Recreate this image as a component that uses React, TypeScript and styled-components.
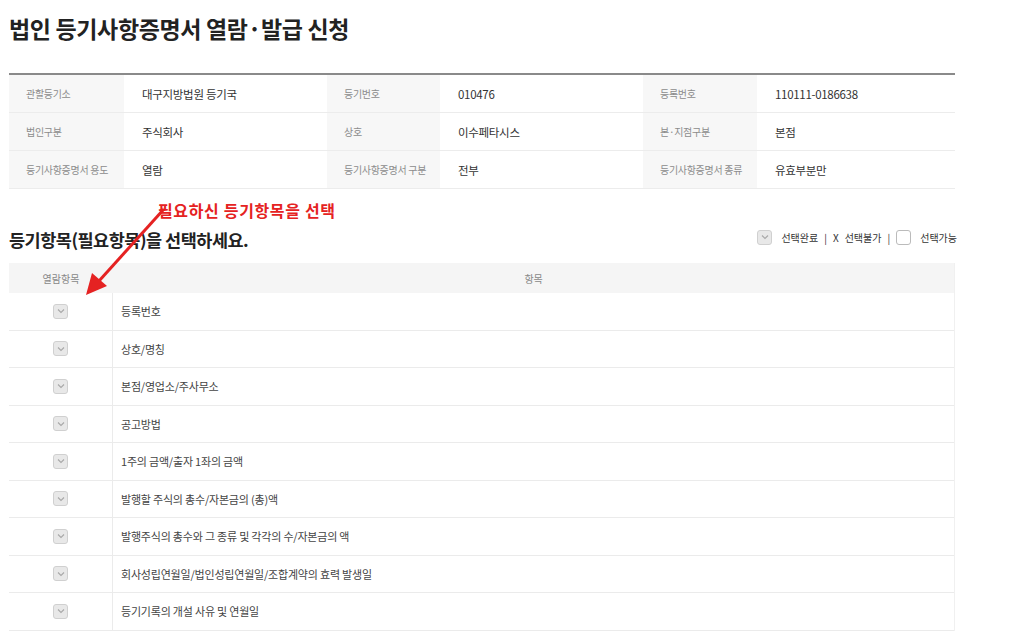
import styled, { createGlobalStyle } from 'styled-components';

const GlobalStyle = createGlobalStyle`
  body {
    margin: 0;
    background: #fff;
    font-family: 'Noto Sans CJK KR', 'Noto Sans', sans-serif;
    color: #333;
  }
`;

const Page = styled.div`
  width: 946px;
  padding: 14px 0 0 9px;
`;

const Title = styled.h1`
  margin: 0;
  font-size: 23px;
  line-height: 28px;
  font-weight: 700;
  color: #222;
  letter-spacing: -0.35px;
`;

const InfoGrid = styled.div`
  margin-top: 31px;
  display: grid;
  grid-template-columns: 115px 203px 113px 203px 114px 198px;
  border-top: 2px solid #8a8a8a;
`;

const InfoCell = styled.div<{ $label?: boolean }>`
  height: 37px;
  display: flex;
  align-items: center;
  padding-left: ${({ $label }) => ($label ? '17px' : '18px')};
  border-bottom: 1px solid #ececec;
  background: ${({ $label }) => ($label ? '#f7f7f7' : '#fff')};
  font-size: ${({ $label }) => ($label ? '10px' : '11.5px')};
  color: ${({ $label }) => ($label ? '#8c8c8c' : '#333')};
  letter-spacing: -0.3px;
`;

const SectionHead = styled.div`
  position: relative;
  margin-top: 38px;
  display: flex;
  align-items: center;
  justify-content: space-between;
  height: 24px;
`;

const SubTitle = styled.h2`
  margin: 0;
  font-size: 17.5px;
  font-weight: 700;
  color: #222;
  letter-spacing: -0.5px;
`;

const Legend = styled.div`
  display: flex;
  align-items: center;
  gap: 6px;
  font-size: 10px;
  color: #333;
  margin-right: -2px;
  margin-top: -4px;
`;

const LegendText = styled.span`
  margin-left: 3px;
`;

const Note = styled.div`
  position: absolute;
  left: 149px;
  top: -29px;
  font-size: 16px;
  font-weight: 700;
  color: #e52222;
  letter-spacing: 0.65px;
`;

const Arrow = styled.svg`
  position: absolute;
  left: 70px;
  top: -18px;
  overflow: visible;
`;

const Box = styled.span<{ $empty?: boolean }>`
  width: 15px;
  height: 15px;
  box-sizing: border-box;
  border-radius: 3px;
  border: 1px solid ${({ $empty }) => ($empty ? '#bbb' : '#d0d0d0')};
  background: ${({ $empty }) => ($empty ? '#fff' : '#e8e8e8')};
  display: inline-flex;
  align-items: center;
  justify-content: center;
`;

const ItemTable = styled.div`
  margin-top: 12px;
  border-right: 1px solid #f0f0f0;
`;

const Row = styled.div<{ $head?: boolean }>`
  display: grid;
  grid-template-columns: 104px 1fr;
  height: ${({ $head }) => ($head ? '30px' : '36.5px')};
  background: ${({ $head }) => ($head ? '#f5f5f5' : '#fff')};
  border-bottom: ${({ $head }) => ($head ? 'none' : '1px solid #ebebeb')};
`;

const CheckCell = styled.div<{ $head?: boolean }>`
  display: flex;
  align-items: center;
  justify-content: center;
  border-right: ${({ $head }) => ($head ? 'none' : '1px solid #ebebeb')};
  font-size: 10px;
  color: #888;
`;

const ItemCell = styled.div<{ $head?: boolean }>`
  display: flex;
  align-items: center;
  justify-content: ${({ $head }) => ($head ? 'center' : 'flex-start')};
  padding-left: ${({ $head }) => ($head ? '0' : '8px')};
  font-size: ${({ $head }) => ($head ? '10px' : '11px')};
  color: ${({ $head }) => ($head ? '#888' : '#444')};
  letter-spacing: -0.2px;
`;

const info = [
  ['관할등기소', '대구지방법원 등기국', '등기번호', '010476', '등록번호', '110111-0186638'],
  ['법인구분', '주식회사', '상호', '이수페타시스', '본·지점구분', '본점'],
  ['등기사항증명서 용도', '열람', '등기사항증명서 구분', '전부', '등기사항증명서 종류', '유효부분만'],
];

const items = [
  '등록번호',
  '상호/명칭',
  '본점/영업소/주사무소',
  '공고방법',
  '1주의 금액/출자 1좌의 금액',
  '발행할 주식의 총수/자본금의 (총)액',
  '발행주식의 총수와 그 종류 및 각각의 수/자본금의 액',
  '회사성립연월일/법인성립연월일/조합계약의 효력 발생일',
  '등기기록의 개설 사유 및 연월일',
];

function Checked() {
  return (
    <Box>
      <svg width="8" height="6" viewBox="0 0 8 6">
        <path d="M1 1.5 L4 4.5 L7 1.5" fill="none" stroke="#a8a8a8" strokeWidth="1.1" />
      </svg>
    </Box>
  );
}

export default function App() {
  return (
    <>
      <GlobalStyle />
      <Page>
        <Title>법인 등기사항증명서 열람·발급 신청</Title>
        <InfoGrid>
          {info.map((row) =>
            row.map((text, i) => (
              <InfoCell key={text} $label={i % 2 === 0}>
                {text}
              </InfoCell>
            )),
          )}
        </InfoGrid>
        <SectionHead>
          <SubTitle>등기항목(필요항목)을 선택하세요.</SubTitle>
          <Legend>
            <Checked />
            <LegendText>선택완료</LegendText>
            <span>|</span>
            <span>X</span>
            <span>선택불가</span>
            <span>|</span>
            <Box $empty />
            <LegendText>선택가능</LegendText>
          </Legend>
          <Note>필요하신 등기항목을 선택</Note>
          <Arrow width="100" height="90" viewBox="0 0 100 90">
            <line x1="85" y1="0" x2="20" y2="72" stroke="#e52222" strokeWidth="3" />
            <polygon points="7,86 13,64 28,77" fill="#e52222" />
          </Arrow>
        </SectionHead>
        <ItemTable>
          <Row $head>
            <CheckCell $head>열람항목</CheckCell>
            <ItemCell $head>항목</ItemCell>
          </Row>
          {items.map((item) => (
            <Row key={item}>
              <CheckCell>
                <Checked />
              </CheckCell>
              <ItemCell>{item}</ItemCell>
            </Row>
          ))}
        </ItemTable>
      </Page>
    </>
  );
}
